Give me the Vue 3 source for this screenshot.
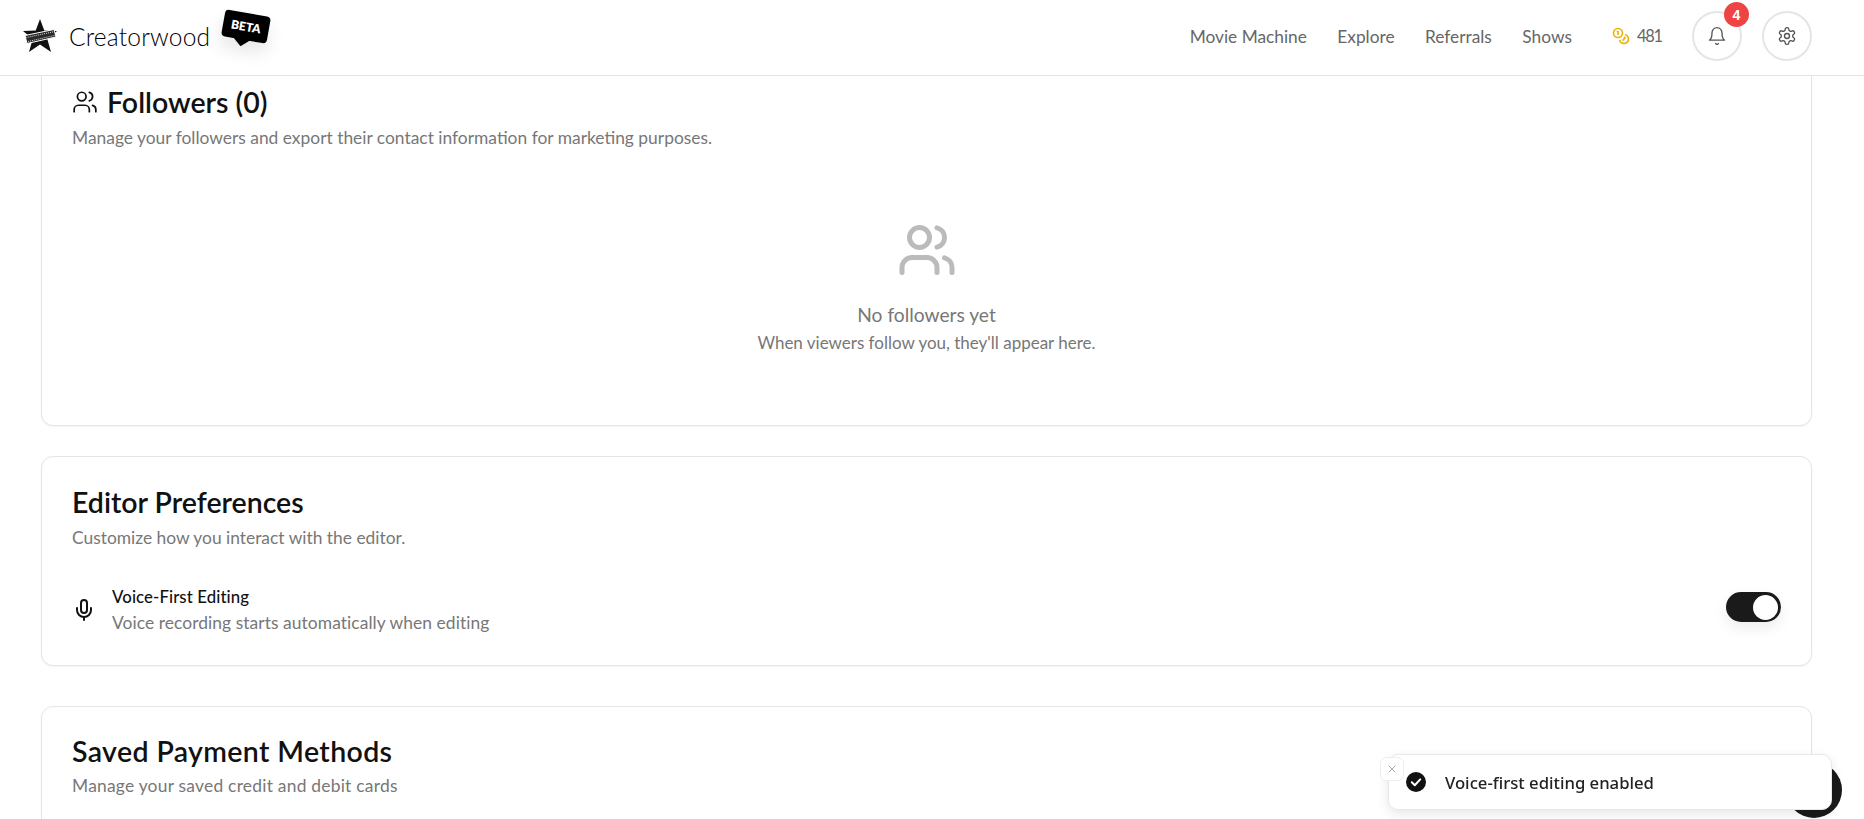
<template>
  <div class="page">
    <header class="topbar">
      <div class="brand">
        <svg class="logo" viewBox="0 0 36 34" width="36" height="34">
          <polygon points="18,0 22.3,11.5 35,12 25.3,20 29,33 18,25.5 7,33 10.7,20 1,12 13.7,11.5" fill="#111" />
          <path d="M3 16.5 32 10.5 34 18 5 24.5Z" fill="#2a2a2a" stroke="#fff" stroke-width="1" />
          <path d="M4.5 18.5 32.5 12.6M6 22.5 33 16.4" stroke="#ddd" stroke-width="1" stroke-dasharray="1 1" fill="none" />
        </svg>
        <span class="brand-name">Creatorwood</span>
        <div class="beta">
          <span>BETA</span>
          <i class="beta-tail"></i>
        </div>
      </div>
      <nav class="nav">
        <a v-for="link in links" :key="link" class="nav-link">{{ link }}</a>
        <div class="credits">
          <svg width="18" height="18" viewBox="0 0 24 24" fill="none" stroke="#eab308" stroke-width="2.2" stroke-linecap="round" stroke-linejoin="round">
            <circle cx="8" cy="8" r="6" />
            <path d="M18.09 10.37A6 6 0 1 1 10.34 18" />
            <path d="M7 6h1v4" />
            <path d="m16.71 13.88.7.71-2.82 2.82" />
          </svg>
          <span>481</span>
        </div>
        <button class="round-btn">
          <svg width="20" height="20" viewBox="0 0 24 24" fill="none" stroke="#555" stroke-width="1.6" stroke-linecap="round" stroke-linejoin="round">
            <path d="M6 8a6 6 0 0 1 12 0c0 7 3 9 3 9H3s3-2 3-9" />
            <path d="M10.3 21a1.94 1.94 0 0 0 3.4 0" />
          </svg>
          <span class="count">4</span>
        </button>
        <button class="round-btn">
          <svg width="20" height="20" viewBox="0 0 24 24" fill="none" stroke="#555" stroke-width="1.6" stroke-linecap="round" stroke-linejoin="round">
            <path d="M12.22 2h-.44a2 2 0 0 0-2 2v.18a2 2 0 0 1-1 1.73l-.43.25a2 2 0 0 1-2 0l-.15-.08a2 2 0 0 0-2.73.73l-.22.38a2 2 0 0 0 .73 2.73l.15.1a2 2 0 0 1 1 1.72v.51a2 2 0 0 1-1 1.74l-.15.09a2 2 0 0 0-.73 2.73l.22.38a2 2 0 0 0 2.73.73l.15-.08a2 2 0 0 1 2 0l.43.25a2 2 0 0 1 1 1.73V20a2 2 0 0 0 2 2h.44a2 2 0 0 0 2-2v-.18a2 2 0 0 1 1-1.73l.43-.25a2 2 0 0 1 2 0l.15.08a2 2 0 0 0 2.73-.73l.22-.39a2 2 0 0 0-.73-2.73l-.15-.08a2 2 0 0 1-1-1.74v-.5a2 2 0 0 1 1-1.74l.15-.09a2 2 0 0 0 .73-2.73l-.22-.38a2 2 0 0 0-2.73-.73l-.15.08a2 2 0 0 1-2 0l-.43-.25a2 2 0 0 1-1-1.73V4a2 2 0 0 0-2-2z" />
            <circle cx="12" cy="12" r="3" />
          </svg>
        </button>
      </nav>
    </header>

    <main class="content">
      <section class="card card-followers">
        <div class="title-row">
          <svg width="26" height="26" viewBox="0 0 24 24" fill="none" stroke="#111" stroke-width="1.6" stroke-linecap="round" stroke-linejoin="round">
            <path d="M16 21v-2a4 4 0 0 0-4-4H6a4 4 0 0 0-4 4v2" />
            <circle cx="9" cy="7" r="4" />
            <path d="M22 21v-2a4 4 0 0 0-3-3.87" />
            <path d="M16 3.13a4 4 0 0 1 0 7.75" />
          </svg>
          <h2>Followers (0)</h2>
        </div>
        <p class="sub">Manage your followers and export their contact information for marketing purposes.</p>
        <div class="empty">
          <svg width="60" height="60" viewBox="0 0 24 24" fill="none" stroke="#bbb" stroke-width="2" stroke-linecap="round" stroke-linejoin="round">
            <path d="M16 21v-2a4 4 0 0 0-4-4H6a4 4 0 0 0-4 4v2" />
            <circle cx="9" cy="7" r="4" />
            <path d="M22 21v-2a4 4 0 0 0-3-3.87" />
            <path d="M16 3.13a4 4 0 0 1 0 7.75" />
          </svg>
          <p class="empty-title">No followers yet</p>
          <p class="sub">When viewers follow you, they'll appear here.</p>
        </div>
      </section>

      <section class="card card-editor">
        <h2>Editor Preferences</h2>
        <p class="sub">Customize how you interact with the editor.</p>
        <div class="pref">
          <svg width="24" height="24" viewBox="0 0 24 24" fill="none" stroke="#111" stroke-width="2" stroke-linecap="round" stroke-linejoin="round">
            <path d="M12 2a3 3 0 0 0-3 3v7a3 3 0 0 0 6 0V5a3 3 0 0 0-3-3Z" />
            <path d="M19 10v2a7 7 0 0 1-14 0v-2" />
            <line x1="12" x2="12" y1="19" y2="22" />
          </svg>
          <div class="pref-text">
            <div class="pref-name">Voice-First Editing</div>
            <p class="sub">Voice recording starts automatically when editing</p>
          </div>
          <div class="toggle"><i class="knob"></i></div>
        </div>
      </section>

      <section class="card card-payment">
        <h2>Saved Payment Methods</h2>
        <p class="sub">Manage your saved credit and debit cards</p>
      </section>
    </main>

    <div class="chat-bubble"></div>
    <div class="toast">
      <button class="toast-close">
        <svg width="12" height="12" viewBox="0 0 24 24" fill="none" stroke="#aaa" stroke-width="2" stroke-linecap="round">
          <path d="M18 6 6 18" /><path d="m6 6 12 12" />
        </svg>
      </button>
      <svg width="20" height="20" viewBox="0 0 20 20">
        <circle cx="10" cy="10" r="10" fill="#111" />
        <path d="M5.8 10.3 8.8 13.2 14.2 7.4" fill="none" stroke="#fff" stroke-width="2" stroke-linecap="round" stroke-linejoin="round" />
      </svg>
      <span>Voice-first editing enabled</span>
    </div>
  </div>
</template>

<script setup>
const links = ['Movie Machine', 'Explore', 'Referrals', 'Shows']
</script>

<style>
html, body { margin: 0; background: #fff; overflow: hidden; }
</style>

<style scoped>
.page { height: 819px; overflow: hidden; font-family: Lato, "Open Sans", sans-serif; color: #111; background: #fff; }
.topbar { height: 76px; box-sizing: border-box; border-bottom: 1px solid #e5e5e5; display: flex; align-items: center; justify-content: space-between; padding: 0 52px 3px 22px; background: #fff; }
.brand { display: flex; align-items: center; }
.logo { margin-right: 11px; }
.brand-name { font-size: 24.5px; font-weight: 300; letter-spacing: 0.2px; color: #000; }
.beta { position: relative; margin: -20px 0 0 13px; background: #000; color: #fff; font-size: 12px; font-weight: 800; padding: 6px 8px; border-radius: 4px; transform: rotate(10deg); box-shadow: 0 10px 18px rgba(0,0,0,.1); }
.beta-tail { position: absolute; left: 12px; bottom: -7px; width: 18px; height: 8px; background: #000; clip-path: polygon(0 0, 100% 0, 50% 100%); }
.nav { display: flex; align-items: center; }
.nav-link { font-size: 17.3px; color: #666; margin-right: 30.5px; }
.credits { display: flex; align-items: center; gap: 7px; font-size: 16.5px; letter-spacing: -1.2px; color: #666; margin: 0 30px 0 9.5px; }
.round-btn { position: relative; width: 50px; height: 50px; border: 2px solid #e5e5e5; border-radius: 50%; background: #fff; display: flex; align-items: center; justify-content: center; padding: 0; margin-left: 20px; }
.credits + .round-btn { margin-left: 0; }
.count { position: absolute; top: -11px; right: -9px; width: 25px; height: 25px; border-radius: 50%; background: #ef4444; color: #fff; font-size: 14px; font-weight: 700; display: flex; align-items: center; justify-content: center; }
.content { height: 743px; overflow: hidden; padding: 0 52px 0 41px; }
.card { box-sizing: border-box; border: 1px solid #e5e5e5; border-radius: 12px; box-shadow: 0 1px 2px rgba(0,0,0,.05); padding: 0 30px; background: #fff; }
.card h2 { margin: 0; font-size: 28.5px; line-height: 38px; font-weight: 600; color: #111; }
.sub { margin: 0; font-size: 17.4px; line-height: 24px; color: #777; }
.card-followers { height: 370px; margin-top: -20px; padding-top: 26px; }
.title-row { display: flex; align-items: center; gap: 9px; }
.card-followers > .sub { margin-top: 5px; }
.empty { display: flex; flex-direction: column; align-items: center; margin-top: 70px; }
.empty-title { margin: 20px 0 0; font-size: 19.2px; line-height: 30px; color: #777; }
.empty .sub { margin-top: 1px; font-size: 17px; }
.card-editor { height: 210px; margin-top: 30px; padding-top: 26px; }
.card-editor > .sub { margin-top: 5px; }
.pref { display: flex; align-items: center; margin-top: 35px; }
.pref-text { margin-left: 16px; }
.pref-name { font-size: 16.8px; line-height: 24px; font-weight: 500; letter-spacing: .1px; }
.pref-text .sub { margin-top: 2px; letter-spacing: .07px; }
.toggle { margin-left: auto; margin-top: -6px; width: 55px; height: 30px; background: #1a1a1a; border-radius: 15px; display: flex; align-items: center; justify-content: flex-end; padding-right: 3px; box-sizing: border-box; box-shadow: 0 6px 14px rgba(0,0,0,.08); }
.knob { width: 25px; height: 25px; border-radius: 50%; background: #fff; }
.card-payment { height: 200px; margin-top: 40px; padding-top: 25px; }
.card-payment h2 { letter-spacing: .38px; }
.card-payment .sub { margin-top: 4px; letter-spacing: .24px; }
.chat-bubble { position: fixed; right: 22px; bottom: 1px; width: 56px; height: 56px; border-radius: 50%; background: #1a1a1a; }
.toast { position: fixed; left: 1388px; top: 754px; width: 444px; height: 56px; box-sizing: border-box; background: #fff; border: 1px solid #e8e8e8; border-radius: 10px; box-shadow: 0 4px 12px rgba(0,0,0,.1); display: flex; align-items: center; gap: 19px; padding-left: 17px; font-family: "Noto Sans", sans-serif; font-size: 16.7px; font-weight: 500; color: #222; }
.toast-close { position: absolute; left: -9px; top: 2px; width: 24px; height: 24px; border: 1px solid #eee; border-radius: 6px; background: #fff; padding: 0; display: flex; align-items: center; justify-content: center; }
</style>
